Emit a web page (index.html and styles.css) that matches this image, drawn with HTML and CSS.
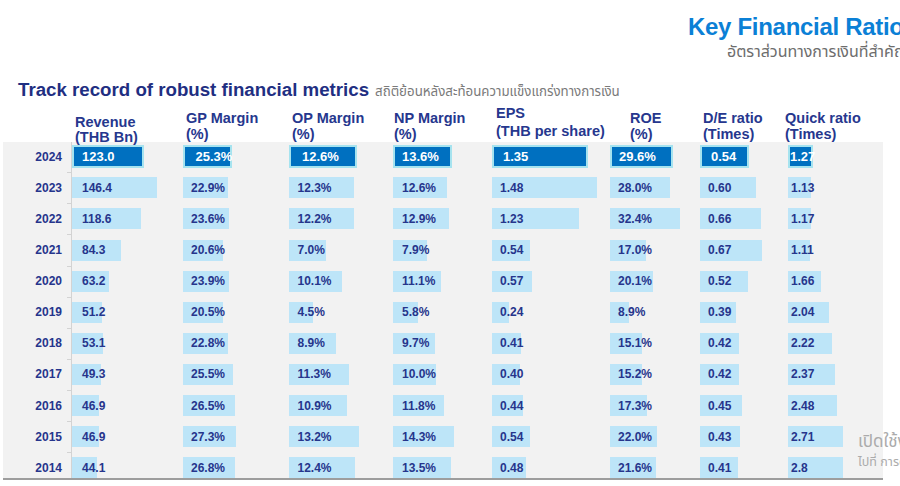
FILE: index.html
```html
<!DOCTYPE html>
<html lang="en">
<head>
<meta charset="utf-8">
<title>Key Financial Ratios</title>
<link rel="stylesheet" href="styles.css">
</head>
<body>
<header class="hero">
  <h1 class="hero-title">Key Financial Ratios</h1>
  <p class="hero-sub">อัตราส่วนทางการเงินที่สำคัญ</p>
</header>

<div class="section-title">
  <h2>Track record of robust financial metrics</h2>
  <span class="section-th">สถิติย้อนหลังสะท้อนความแข็งแกร่งทางการเงิน</span>
</div>

<div class="col-heads">
  <div class="gap"></div>
  <div class="head h-rev">Revenue<br>(THB Bn)</div>
  <div class="head">GP Margin<br>(%)</div>
  <div class="head">OP Margin<br>(%)</div>
  <div class="head">NP Margin<br>(%)</div>
  <div class="head h-eps">EPS<br>(THB per share)</div>
  <div class="head">ROE<br>(%)</div>
  <div class="head">D/E ratio<br>(Times)</div>
  <div class="head">Quick ratio<br>(Times)</div>
</div>

<section class="panel">
  <div class="table">
    <div class="yr">2024</div>
    <div class="cell rev"><span class="bar hl" style="width:72px">123.0</span></div>
    <div class="cell gp"><span class="bar hl" style="width:49px">25.3%</span></div>
    <div class="cell op"><span class="bar hl" style="width:68px">12.6%</span></div>
    <div class="cell np"><span class="bar hl" style="width:59px">13.6%</span></div>
    <div class="cell eps"><span class="bar hl" style="width:96px">1.35</span></div>
    <div class="cell roe"><span class="bar hl" style="width:63px">29.6%</span></div>
    <div class="cell de"><span class="bar hl" style="width:49px">0.54</span></div>
    <div class="cell qr"><span class="bar hl" style="width:25px">1.27</span></div>

    <div class="yr">2023</div>
    <div class="cell rev"><span class="bar" style="width:85px">146.4</span></div>
    <div class="cell gp"><span class="bar" style="width:45px">22.9%</span></div>
    <div class="cell op"><span class="bar" style="width:65px">12.3%</span></div>
    <div class="cell np"><span class="bar" style="width:54px">12.6%</span></div>
    <div class="cell eps"><span class="bar" style="width:105px">1.48</span></div>
    <div class="cell roe"><span class="bar" style="width:60px">28.0%</span></div>
    <div class="cell de"><span class="bar" style="width:56px">0.60</span></div>
    <div class="cell qr"><span class="bar" style="width:23px">1.13</span></div>

    <div class="yr">2022</div>
    <div class="cell rev"><span class="bar" style="width:69px">118.6</span></div>
    <div class="cell gp"><span class="bar" style="width:46px">23.6%</span></div>
    <div class="cell op"><span class="bar" style="width:65px">12.2%</span></div>
    <div class="cell np"><span class="bar" style="width:56px">12.9%</span></div>
    <div class="cell eps"><span class="bar" style="width:87px">1.23</span></div>
    <div class="cell roe"><span class="bar" style="width:70px">32.4%</span></div>
    <div class="cell de"><span class="bar" style="width:61px">0.66</span></div>
    <div class="cell qr"><span class="bar" style="width:23px">1.17</span></div>

    <div class="yr">2021</div>
    <div class="cell rev"><span class="bar" style="width:49px">84.3</span></div>
    <div class="cell gp"><span class="bar" style="width:40px">20.6%</span></div>
    <div class="cell op"><span class="bar" style="width:37px">7.0%</span></div>
    <div class="cell np"><span class="bar" style="width:34px">7.9%</span></div>
    <div class="cell eps"><span class="bar" style="width:38px">0.54</span></div>
    <div class="cell roe"><span class="bar" style="width:36px">17.0%</span></div>
    <div class="cell de"><span class="bar" style="width:62px">0.67</span></div>
    <div class="cell qr"><span class="bar" style="width:22px">1.11</span></div>

    <div class="yr">2020</div>
    <div class="cell rev"><span class="bar" style="width:37px">63.2</span></div>
    <div class="cell gp"><span class="bar" style="width:46px">23.9%</span></div>
    <div class="cell op"><span class="bar" style="width:53px">10.1%</span></div>
    <div class="cell np"><span class="bar" style="width:48px">11.1%</span></div>
    <div class="cell eps"><span class="bar" style="width:40px">0.57</span></div>
    <div class="cell roe"><span class="bar" style="width:43px">20.1%</span></div>
    <div class="cell de"><span class="bar" style="width:48px">0.52</span></div>
    <div class="cell qr"><span class="bar" style="width:33px">1.66</span></div>

    <div class="yr">2019</div>
    <div class="cell rev"><span class="bar" style="width:30px">51.2</span></div>
    <div class="cell gp"><span class="bar" style="width:40px">20.5%</span></div>
    <div class="cell op"><span class="bar" style="width:24px">4.5%</span></div>
    <div class="cell np"><span class="bar" style="width:25px">5.8%</span></div>
    <div class="cell eps"><span class="bar" style="width:17px">0.24</span></div>
    <div class="cell roe"><span class="bar" style="width:19px">8.9%</span></div>
    <div class="cell de"><span class="bar" style="width:36px">0.39</span></div>
    <div class="cell qr"><span class="bar" style="width:41px">2.04</span></div>

    <div class="yr">2018</div>
    <div class="cell rev"><span class="bar" style="width:31px">53.1</span></div>
    <div class="cell gp"><span class="bar" style="width:45px">22.8%</span></div>
    <div class="cell op"><span class="bar" style="width:47px">8.9%</span></div>
    <div class="cell np"><span class="bar" style="width:42px">9.7%</span></div>
    <div class="cell eps"><span class="bar" style="width:29px">0.41</span></div>
    <div class="cell roe"><span class="bar" style="width:32px">15.1%</span></div>
    <div class="cell de"><span class="bar" style="width:39px">0.42</span></div>
    <div class="cell qr"><span class="bar" style="width:44px">2.22</span></div>

    <div class="yr">2017</div>
    <div class="cell rev"><span class="bar" style="width:29px">49.3</span></div>
    <div class="cell gp"><span class="bar" style="width:50px">25.5%</span></div>
    <div class="cell op"><span class="bar" style="width:60px">11.3%</span></div>
    <div class="cell np"><span class="bar" style="width:43px">10.0%</span></div>
    <div class="cell eps"><span class="bar" style="width:28px">0.40</span></div>
    <div class="cell roe"><span class="bar" style="width:32px">15.2%</span></div>
    <div class="cell de"><span class="bar" style="width:39px">0.42</span></div>
    <div class="cell qr"><span class="bar" style="width:47px">2.37</span></div>

    <div class="yr">2016</div>
    <div class="cell rev"><span class="bar" style="width:27px">46.9</span></div>
    <div class="cell gp"><span class="bar" style="width:52px">26.5%</span></div>
    <div class="cell op"><span class="bar" style="width:58px">10.9%</span></div>
    <div class="cell np"><span class="bar" style="width:51px">11.8%</span></div>
    <div class="cell eps"><span class="bar" style="width:31px">0.44</span></div>
    <div class="cell roe"><span class="bar" style="width:37px">17.3%</span></div>
    <div class="cell de"><span class="bar" style="width:42px">0.45</span></div>
    <div class="cell qr"><span class="bar" style="width:49px">2.48</span></div>

    <div class="yr">2015</div>
    <div class="cell rev"><span class="bar" style="width:27px">46.9</span></div>
    <div class="cell gp"><span class="bar" style="width:53px">27.3%</span></div>
    <div class="cell op"><span class="bar" style="width:70px">13.2%</span></div>
    <div class="cell np"><span class="bar" style="width:61px">14.3%</span></div>
    <div class="cell eps"><span class="bar" style="width:38px">0.54</span></div>
    <div class="cell roe"><span class="bar" style="width:47px">22.0%</span></div>
    <div class="cell de"><span class="bar" style="width:40px">0.43</span></div>
    <div class="cell qr"><span class="bar" style="width:55px">2.71</span></div>

    <div class="yr">2014</div>
    <div class="cell rev"><span class="bar" style="width:25px">44.1</span></div>
    <div class="cell gp"><span class="bar" style="width:52px">26.8%</span></div>
    <div class="cell op"><span class="bar" style="width:66px">12.4%</span></div>
    <div class="cell np"><span class="bar" style="width:58px">13.5%</span></div>
    <div class="cell eps"><span class="bar" style="width:34px">0.48</span></div>
    <div class="cell roe"><span class="bar" style="width:46px">21.6%</span></div>
    <div class="cell de"><span class="bar" style="width:38px">0.41</span></div>
    <div class="cell qr"><span class="bar" style="width:55px">2.8</span></div>
  </div>
</section>

<div class="watermark">
  <p class="wm-1">เปิดใช้งาน Windows</p>
  <p class="wm-2">ไปที่ การตั้งค่า เพื่อเปิดใช้งาน Windows</p>
</div>
</body>
</html>
```

FILE: styles.css
```css
* {
  box-sizing: border-box;
  margin: 0;
  padding: 0;
}

html, body {
  width: 900px;
  height: 486px;
  overflow: hidden;
  background: #ffffff;
}

body {
  position: relative;
  font-family: "Liberation Sans", Arial, "Noto Sans Thai", Tahoma, sans-serif;
}

/* ---------- top-right heading ---------- */
.hero {
  height: 66px;
  padding: 12.7px 0 0 688px;
  white-space: nowrap;
}

.hero-title {
  font-size: 24px;
  line-height: 28px;
  font-weight: 700;
  color: #0b80d6;
  letter-spacing: -0.3px;
}

.hero-sub {
  padding-left: 39px;
  font-size: 16px;
  line-height: 22px;
  color: #6d6d6d;
}

/* ---------- section title ---------- */
.section-title {
  height: 43.5px;
  padding: 12.6px 0 0 18px;
  display: flex;
  align-items: baseline;
  gap: 6px;
  white-space: nowrap;
}

.section-title h2 {
  font-size: 18.7px;
  line-height: 22px;
  font-weight: 700;
  color: #1f2f82;
}

.section-th {
  font-size: 13.3px;
  color: #7a7a7a;
}

/* ---------- column headers ---------- */
.col-heads {
  height: 32.5px;
  display: grid;
  grid-template-columns: 75px 111px 106px 102px 102px 134px 73px 82px 1fr;
  align-items: start;
}

.head {
  font-size: 14.5px;
  line-height: 16px;
  font-weight: 700;
  color: #26378e;
  white-space: nowrap;
}

.h-rev {
  margin-top: 5.5px;
  line-height: 14.5px;
}

.h-eps {
  margin-top: -4.3px;
  line-height: 17.5px;
}

/* ---------- data panel ---------- */
.panel {
  margin-left: 3px;
  width: 880px;
  height: 338px;
  background: #f2f2f2;
  border-bottom: 2px solid #9d9d9d;
  overflow: hidden;
}

.table {
  display: grid;
  grid-template-columns: 69px 111px 106px 104px 99px 118px 90px 88px 1fr;
  grid-auto-rows: 31.1px;
  margin-top: -0.8px;
}

.yr {
  display: flex;
  align-items: center;
  justify-content: flex-end;
  padding-right: 9px;
  border-right: 1px solid #d3d3d3;
  background: linear-gradient(#d3d3d3, #d3d3d3) no-repeat right top / 4px 1px;
  font-size: 12px;
  font-weight: 700;
  color: #26358c;
}

.cell {
  display: flex;
  align-items: center;
}

.bar {
  display: flex;
  align-items: center;
  height: 21px;
  padding-left: 8px;
  background: #bde5f8;
  white-space: nowrap;
  font-size: 12px;
  font-weight: 700;
  color: #26358c;
}

.rev .bar { padding-left: 10px; }
.op .bar { padding-left: 8.5px; }
.np .bar { padding-left: 9px; }
.qr .bar { padding-left: 3px; }

.bar.hl {
  height: 23px;
  background: #0070c0;
  border: 2px solid #a6e3ef;
  color: #ffffff;
  font-size: 13px;
  padding-left: 8px;
}

.gp .bar.hl { padding-left: 10.5px; }
.op .bar.hl { padding-left: 11px; }
.np .bar.hl { padding-left: 7px; }
.eps .bar.hl { padding-left: 9px; }
.roe .bar.hl { padding-left: 7px; }
.de .bar.hl { padding-left: 9px; }
.qr .bar.hl { padding-left: 0; }

/* ---------- OS watermark overlay ---------- */
.watermark {
  position: absolute;
  left: 858px;
  top: 430px;
  white-space: nowrap;
  color: #ababab;
}

.wm-1 {
  font-size: 17px;
  line-height: 24px;
}

.wm-2 {
  font-size: 12.5px;
  line-height: 16px;
}
```
